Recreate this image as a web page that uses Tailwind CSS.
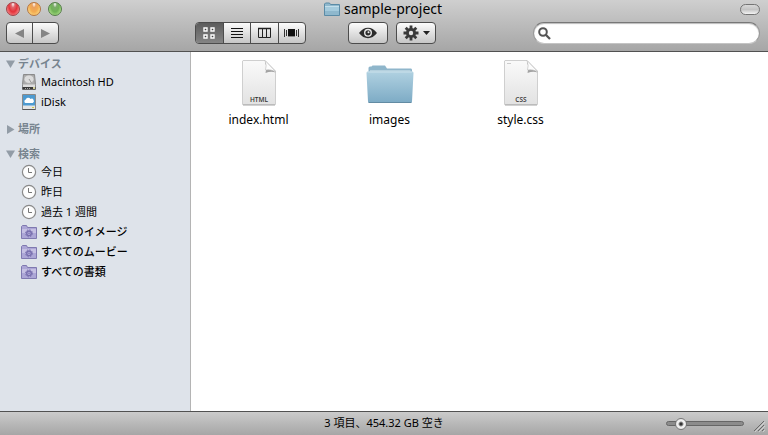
<!DOCTYPE html>
<html lang="ja">
<head>
  <meta charset="UTF-8" />
  <meta name="viewport" content="width=device-width, initial-scale=1.0" />
  <title>sample-project</title>
  <script src="https://cdn.jsdelivr.net/npm/@tailwindcss/browser@4"></script>
</head>
<body class="flex h-screen flex-col bg-white font-['Noto_Sans','Noto_Sans_CJK_JP',sans-serif] text-black">

  <!-- shared shapes -->
  <svg width="0" height="0" class="hidden" aria-hidden="true">
    <symbol id="clock" viewBox="0 0 16 16">
      <circle cx="8" cy="8" r="6.600" fill="#fdfdfd" stroke="#8a8a8a" stroke-width="1.200" />
      <path d="M7.500 4v4.500H11" fill="none" stroke="#777" />
    </symbol>
    <symbol id="smart" viewBox="0 0 16 16">
      <path d="M.5 14.500V2.500l1-1h4l1 2h9v11z" fill="#aca6d6" stroke="#7f79b0" />
      <path d="M1 5h14v4H1z" fill="#c5c0e3" />
      <circle cx="8" cy="9.300" r="2.300" fill="#b4aedb" stroke="#766dad" stroke-width="1.400" />
      <circle cx="8" cy="9.300" r="3.500" fill="none" stroke="#766dad" stroke-dasharray="1.375 1.375" />
      <circle cx="8" cy="9.300" r=".8" fill="#766dad" />
    </symbol>
  </svg>

  <header class="border-b border-[#515151] bg-linear-to-b from-[#cfcfcf] to-[#a6a6a6]">
    <div class="grid h-[18px] grid-cols-[1fr_auto_1fr] items-center pr-2 pl-[6px]">
      <div class="flex gap-[7px]">
        <button aria-label="閉じる" class="h-3.5 w-3.5 rounded-full border border-[#a04349] bg-[radial-gradient(ellipse_at_50%_10%,#fff_0%,#df6a70_22%,#e5323a_50%,#ffb4b2_100%)]"></button>
        <button aria-label="しまう" class="h-3.5 w-3.5 rounded-full border border-[#b57440] bg-[radial-gradient(ellipse_at_50%_10%,#fff_0%,#eaa060_22%,#f4ab50_50%,#fff09c_100%)]"></button>
        <button aria-label="拡大" class="h-3.5 w-3.5 rounded-full border border-[#547d48] bg-[radial-gradient(ellipse_at_50%_10%,#fff_0%,#7cab6a_22%,#6fb355_50%,#cdf4a4_100%)]"></button>
      </div>
      <h1 class="flex items-center gap-1 text-sm leading-[18px]">
        <svg class="h-4 w-4" viewBox="0 0 16 16" aria-hidden="true">
          <path d="M.5 14.500V3l1-1h4l1 1.500h9v11z" fill="#8fb8cd" stroke="#5b8ba6" />
          <path d="M1 5h14v5H1z" fill="#a5cbdd" />
          <path d="M1 5.500h14" stroke="#c4dfeb" />
        </svg>
        sample-project
      </h1>
      <button aria-label="ツールバー" class="h-[11px] w-5 justify-self-end rounded-full border border-[#747474] bg-linear-to-b from-[#d8d8d8] via-[#c4c4c4] to-[#f4f4f4]"></button>
    </div>

    <div class="flex items-center pt-1 pr-2 pb-[7px] pl-[6px]">
      <div class="flex h-[22px] w-[53px] divide-x divide-[#4c4c4c] overflow-hidden rounded-[4px] border border-[#4c4c4c] bg-linear-to-b from-[#fcfcfc] to-[#c6c6c6]">
        <button aria-label="戻る" class="flex flex-1 items-center justify-center">
          <svg class="h-[9px] w-[9px]" viewBox="0 0 9 9"><path d="M0 4.500L9 0v9z" fill="#858585" /></svg>
        </button>
        <button aria-label="進む" class="flex flex-1 items-center justify-center">
          <svg class="h-[9px] w-[9px]" viewBox="0 0 9 9"><path d="M9 4.500L0 0v9z" fill="#858585" /></svg>
        </button>
      </div>

      <div class="ml-[136px] flex h-[22px] w-[111px] divide-x divide-[#4c4c4c] overflow-hidden rounded-[4px] border border-[#4c4c4c] bg-linear-to-b from-[#fcfcfc] to-[#c6c6c6]">
        <button aria-label="アイコン" aria-pressed="true" class="flex flex-1 items-center justify-center bg-linear-to-b from-[#5c5c5c] to-[#858585]">
          <svg class="h-3 w-3" viewBox="0 0 12 12" fill="#444" stroke="#fff" stroke-width="1.400">
            <path d="M1 1h3v3H1zM8 1h3v3H8zM1 8h3v3H1zM8 8h3v3H8z" />
          </svg>
        </button>
        <button aria-label="リスト" class="flex flex-1 items-center justify-center">
          <svg class="h-3 w-3" viewBox="0 0 12 12" stroke="#111"><path d="M0 1.500h12M0 4.500h12M0 7.500h12M0 10.500h12" /></svg>
        </button>
        <button aria-label="カラム" class="flex flex-1 items-center justify-center">
          <svg class="h-3 w-[13px]" viewBox="0 0 13 12" fill="none" stroke="#222"><path d="M.5 1.500h12v9H.5zM4.500 1.500v9M8.500 1.500v9" /><path d="M0 1.500h13" stroke-width="1.500" /></svg>
        </button>
        <button aria-label="Cover Flow" class="flex flex-1 items-center justify-center">
          <svg class="h-3 w-[15px]" viewBox="0 0 15 12">
            <path d="M.5 2v8M2.500 3v6M12.500 3v6M14.500 2v8" stroke="#333" />
            <path d="M4 2h7v7H4z" fill="#111" /><path d="M4 9.500h7" stroke="#888" />
          </svg>
        </button>
      </div>

      <button aria-label="クイックルック" class="ml-[42px] flex h-[22px] w-10 items-center justify-center rounded-[4px] border border-[#4c4c4c] bg-linear-to-b from-[#fcfcfc] to-[#c6c6c6]">
        <svg class="h-3 w-[18px]" viewBox="0 0 18 12">
          <path d="M0 6Q4 .8 9 .8T18 6Q14 11.200 9 11.200T0 6z" fill="#2c2c2c" />
          <circle cx="9" cy="5.800" r="3.300" fill="#2c2c2c" stroke="#e8e8e8" stroke-width="1.400" />
          <circle cx="9.500" cy="5.300" r="1" fill="#eee" />
        </svg>
      </button>
      <button aria-label="アクション" class="ml-2 flex h-[22px] w-10 items-center justify-center gap-1 rounded-[4px] border border-[#4c4c4c] bg-linear-to-b from-[#fcfcfc] to-[#c6c6c6]">
        <svg class="h-4 w-4" viewBox="0 0 16 16">
          <path d="M8 .5v15M.5 8h15M2.700 2.700l10.600 10.600M13.300 2.700L2.700 13.300" stroke="#3a3a3a" stroke-width="2.800" />
          <circle cx="8" cy="8" r="5" fill="#3a3a3a" /><circle cx="8" cy="8" r="2.200" fill="#e3e3e3" />
        </svg>
        <svg class="h-1 w-[7px]" viewBox="0 0 7 4"><path d="M0 0h7L3.500 4z" fill="#222" /></svg>
      </button>

      <label class="ml-auto flex h-[22px] w-[227px] items-center gap-1 rounded-full border border-t-[#777] border-x-[#999] border-b-[#c4c4c4] bg-white pl-1 shadow-[inset_0_1px_1px_#bbb]">
        <svg class="h-[13px] w-[13px]" viewBox="0 0 13 13" fill="none" stroke="#555" stroke-width="2">
          <circle cx="5" cy="5" r="3.800" /><path d="M7.800 7.800l4.200 4.200" stroke-width="2.300" />
        </svg>
        <input type="search" aria-label="検索" class="min-w-0 flex-1 bg-transparent text-[11px] outline-none" />
      </label>
    </div>
  </header>

  <div class="flex min-h-0 flex-1">
    <nav class="flex w-[191px] shrink-0 flex-col gap-[9px] border-r border-[#b4b4b4] bg-[#dee3ea] pt-1 text-[11px]">
      <section>
        <button class="flex h-4 items-center gap-[3px] pl-[6px] font-bold text-[#77848f]">
          <svg class="h-[9px] w-[9px]" viewBox="0 0 9 9"><path d="M0 .5h9L4.500 8z" fill="#929ca6" /></svg>
          デバイス
        </button>
        <ul>
          <li><a href="#" class="flex h-5 items-center gap-1 pl-[21px]">
            <svg class="h-4 w-4" viewBox="0 0 16 16">
              <path d="M2.500 .5h11l1 10v5h-13v-5z" fill="#a9a9a9" stroke="#8a8a8a" />
              <ellipse cx="8" cy="5.200" rx="5" ry="4.200" fill="#dcdcdc" stroke="#a0a0a0" stroke-width=".6" />
              <path d="M8 5l2.500 4" stroke="#999" /><path d="M2 10.500h12V13H2z" fill="#dedede" />
              <path d="M1.500 13h13v2.500h-13z" fill="#3a3a3a" /><path d="M4 14.500h6" stroke="#aaa" stroke-dasharray="1 1" /><path d="M12 13h2v2h-2z" fill="#d4d29a" />
            </svg>
            Macintosh HD</a></li>
          <li><a href="#" class="flex h-5 items-center gap-1 pl-[21px]">
            <svg class="h-4 w-4" viewBox="0 0 16 16">
              <path d="M1.500 .5h13v15h-13z" fill="#e5e5e5" stroke="#8a8a8a" />
              <path d="M2 1h12v10.500H2z" fill="#4d9ad0" />
              <path d="M4.500 9a1.700 1.700 0 0 1 0-3.200 2.800 2.800 0 0 1 5-.8 2 2 0 0 1 2.200 4z" fill="#fff" />
              <path d="M1.500 15.500h13" stroke="#555" /><path d="M11 13h2v1h-2z" fill="#d2cc45" />
            </svg>
            iDisk</a></li>
        </ul>
      </section>

      <section>
        <button class="flex h-4 items-center gap-[3px] pl-[6px] font-bold text-[#77848f]">
          <svg class="h-[9px] w-[9px]" viewBox="0 0 9 9"><path d="M1 0v9l7.500-4.500z" fill="#929ca6" /></svg>
          場所
        </button>
      </section>

      <section>
        <button class="flex h-4 items-center gap-[3px] pl-[6px] font-bold text-[#77848f]">
          <svg class="h-[9px] w-[9px]" viewBox="0 0 9 9"><path d="M0 .5h9L4.500 8z" fill="#929ca6" /></svg>
          検索
        </button>
        <ul>
          <li><a href="#" class="flex h-5 items-center gap-1 pl-[21px]"><svg class="h-4 w-4"><use href="#clock" /></svg>今日</a></li>
          <li><a href="#" class="flex h-5 items-center gap-1 pl-[21px]"><svg class="h-4 w-4"><use href="#clock" /></svg>昨日</a></li>
          <li><a href="#" class="flex h-5 items-center gap-1 pl-[21px]"><svg class="h-4 w-4"><use href="#clock" /></svg>過去 1 週間</a></li>
          <li><a href="#" class="flex h-5 items-center gap-1 pl-[21px] font-medium"><svg class="h-4 w-4"><use href="#smart" /></svg>すべてのイメージ</a></li>
          <li><a href="#" class="flex h-5 items-center gap-1 pl-[21px] font-medium"><svg class="h-4 w-4"><use href="#smart" /></svg>すべてのムービー</a></li>
          <li><a href="#" class="flex h-5 items-center gap-1 pl-[21px] font-medium"><svg class="h-4 w-4"><use href="#smart" /></svg>すべての書類</a></li>
        </ul>
      </section>
    </nav>

    <main class="flex-1 overflow-auto bg-white pt-[7px] pl-0.5">
      <ul class="flex flex-wrap text-xs leading-4">
        <li class="flex w-[131px] flex-col items-center gap-[5px]">
          <svg class="h-12 w-12" viewBox="0 0 48 48" role="img" aria-label="HTML">
            <linearGradient id="paper" x1="0" y1="0" x2="0" y2="1"><stop offset="0" stop-color="#fafafa" /><stop offset="1" stop-color="#e2e2e2" /></linearGradient>
            <path d="M8 1.500h22L40.500 12v33.500h-33V2z" fill="url(#paper)" stroke="#cfcfcf" />
            <path d="M8 46h32" stroke="#a6a6a6" />
            <path d="M30 3q2 5 .5 11Q36 12 40.500 13.500z" fill="#a2a2a2" />
            <path d="M30 1.500q2 5 .5 9.500 5-1 10 1.500z" fill="#fcfcfc" stroke="#bbb" stroke-width=".6" />
            <text x="24" y="42.500" text-anchor="middle" font-size="6.500" font-weight="600" fill="#333" font-family="Open Sans, sans-serif">HTML</text>
          </svg>
          <span>index.html</span>
        </li>
        <li class="flex w-[131px] flex-col items-center gap-[5px]">
          <svg class="h-12 w-12" viewBox="0 0 48 48" role="img" aria-label="フォルダ">
            <linearGradient id="folderFill" x1="0" y1="0" x2="0" y2="1"><stop offset="0" stop-color="#b0d1e1" /><stop offset="1" stop-color="#7dabc5" /></linearGradient>
            <path d="M2.500 15V9Q2.500 7.500 4 7.500h1.500l1-1h12.500l2 3h24Q46 9.500 46 11v4z" fill="#8fb6cb" />
            <path d="M4 11h40.500v4H4z" fill="#b4d0de" />
            <path d="M.5 14Q.4 12.500 2 12.500h44q1.600 0 1.500 1.500L46 42.500q0 1-1 1H3q-1 0-1-1z" fill="url(#folderFill)" />
            <path d="M1.500 13h45" stroke="#cbe1eb" />
            <path d="M2.500 43.500h43" stroke="#628ba3" />
          </svg>
          <span>images</span>
        </li>
        <li class="flex w-[131px] flex-col items-center gap-[5px]">
          <svg class="h-12 w-12" viewBox="0 0 48 48" role="img" aria-label="CSS">
            <path d="M8 1.500h22L40.500 12v33.500h-33V2z" fill="url(#paper)" stroke="#cfcfcf" />
            <path d="M8 46h32" stroke="#a6a6a6" /><path d="M10 4.500h4" stroke="#ccc" />
            <path d="M30 3q2 5 .5 11Q36 12 40.500 13.500z" fill="#a2a2a2" />
            <path d="M30 1.500q2 5 .5 9.500 5-1 10 1.500z" fill="#fcfcfc" stroke="#bbb" stroke-width=".6" />
            <text x="24" y="42.500" text-anchor="middle" font-size="6.500" font-weight="600" fill="#333" font-family="Open Sans, sans-serif">CSS</text>
          </svg>
          <span>style.css</span>
        </li>
      </ul>
    </main>
  </div>

  <footer class="grid h-6 shrink-0 grid-cols-[1fr_auto_1fr] items-center border-t border-[#515151] bg-linear-to-b from-[#cbcbcb] to-[#a6a6a6] px-[3px] text-[11px]">
    <p class="col-start-2">3 項目、454.32 GB 空き</p>
    <div class="flex items-center justify-end gap-[9px]">
      <input type="range" aria-label="アイコンサイズ" min="0" max="100" value="13" class="h-3 w-[78px] appearance-none bg-transparent [&::-webkit-slider-runnable-track]:h-[5px] [&::-webkit-slider-runnable-track]:rounded-full [&::-webkit-slider-runnable-track]:border [&::-webkit-slider-runnable-track]:border-[#666] [&::-webkit-slider-runnable-track]:bg-[#8c8c8c] [&::-webkit-slider-thumb]:-mt-1 [&::-webkit-slider-thumb]:h-3 [&::-webkit-slider-thumb]:w-3 [&::-webkit-slider-thumb]:appearance-none [&::-webkit-slider-thumb]:rounded-full [&::-webkit-slider-thumb]:border [&::-webkit-slider-thumb]:border-[#777] [&::-webkit-slider-thumb]:bg-[radial-gradient(circle,#333_0_1px,#f4f4f4_3px,#ddd_100%)]" />
      <svg class="mt-1 h-3 w-3" viewBox="0 0 12 12" stroke="#686868"><path d="M1 11L11 1M5 11l6-6M9 11l2-2" /><path d="M2 12L12 2M6 12l6-6M10 12l2-2" stroke="#ddd" stroke-width=".7" /></svg>
    </div>
  </footer>

</body>
</html>
